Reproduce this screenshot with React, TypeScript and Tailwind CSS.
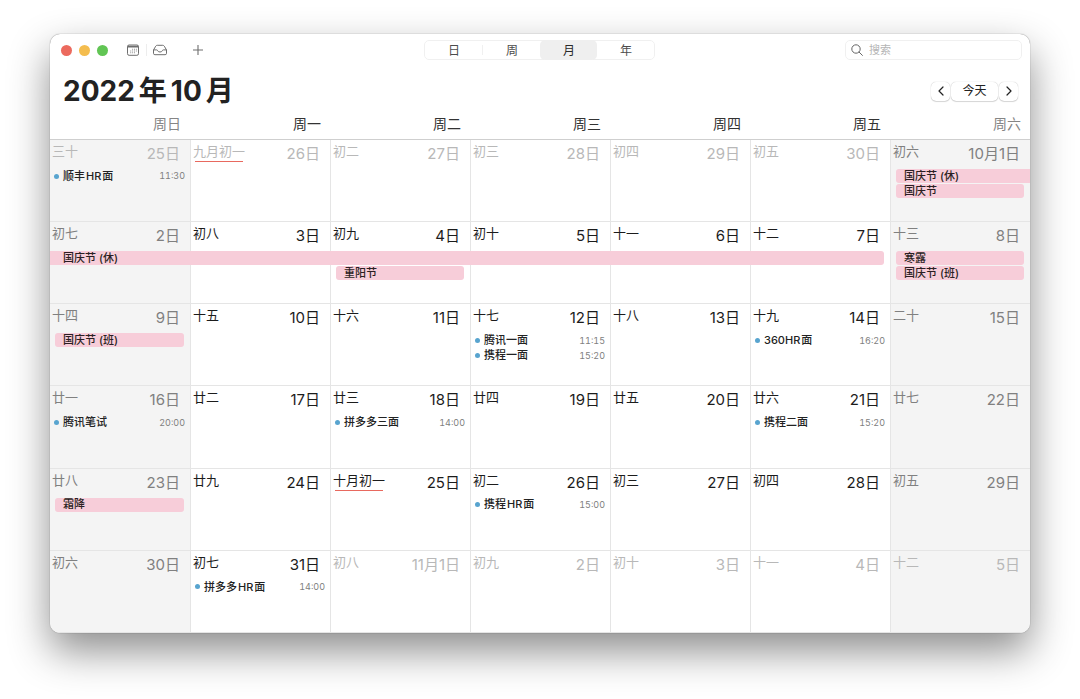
import React from "react";
import clsx from "clsx";

type Tone = "normal" | "weekend" | "outside";

type CalendarEvent =
  | { kind: "timed"; title: string; time: string }
  | { kind: "allDay"; title: string; fromPrevious?: boolean; toNext?: boolean };

interface Day {
  lunar: string;
  date: string;
  outside?: boolean;
  monthStart?: boolean;
  events?: CalendarEvent[];
}

const timed = (title: string, time: string): CalendarEvent => ({ kind: "timed", title, time });
const allDay = (title: string): CalendarEvent => ({ kind: "allDay", title });
const holidayMiddle: CalendarEvent = { kind: "allDay", title: "", fromPrevious: true, toNext: true };

const weekdays = ["周日", "周一", "周二", "周三", "周四", "周五", "周六"];

const weeks: Day[][] = [
  [
    { lunar: "三十", date: "25日", outside: true, events: [timed("顺丰HR面", "11:30")] },
    { lunar: "九月初一", date: "26日", outside: true, monthStart: true },
    { lunar: "初二", date: "27日", outside: true },
    { lunar: "初三", date: "28日", outside: true },
    { lunar: "初四", date: "29日", outside: true },
    { lunar: "初五", date: "30日", outside: true },
    {
      lunar: "初六",
      date: "10月1日",
      events: [{ kind: "allDay", title: "国庆节 (休)", toNext: true }, allDay("国庆节")],
    },
  ],
  [
    {
      lunar: "初七",
      date: "2日",
      events: [{ kind: "allDay", title: "国庆节 (休)", fromPrevious: true, toNext: true }],
    },
    { lunar: "初八", date: "3日", events: [holidayMiddle] },
    { lunar: "初九", date: "4日", events: [holidayMiddle, allDay("重阳节")] },
    { lunar: "初十", date: "5日", events: [holidayMiddle] },
    { lunar: "十一", date: "6日", events: [holidayMiddle] },
    { lunar: "十二", date: "7日", events: [{ kind: "allDay", title: "", fromPrevious: true }] },
    { lunar: "十三", date: "8日", events: [allDay("寒露"), allDay("国庆节 (班)")] },
  ],
  [
    { lunar: "十四", date: "9日", events: [allDay("国庆节 (班)")] },
    { lunar: "十五", date: "10日" },
    { lunar: "十六", date: "11日" },
    { lunar: "十七", date: "12日", events: [timed("腾讯一面", "11:15"), timed("携程一面", "15:20")] },
    { lunar: "十八", date: "13日" },
    { lunar: "十九", date: "14日", events: [timed("360HR面", "16:20")] },
    { lunar: "二十", date: "15日" },
  ],
  [
    { lunar: "廿一", date: "16日", events: [timed("腾讯笔试", "20:00")] },
    { lunar: "廿二", date: "17日" },
    { lunar: "廿三", date: "18日", events: [timed("拼多多三面", "14:00")] },
    { lunar: "廿四", date: "19日" },
    { lunar: "廿五", date: "20日" },
    { lunar: "廿六", date: "21日", events: [timed("携程二面", "15:20")] },
    { lunar: "廿七", date: "22日" },
  ],
  [
    { lunar: "廿八", date: "23日", events: [allDay("霜降")] },
    { lunar: "廿九", date: "24日" },
    { lunar: "十月初一", date: "25日", monthStart: true },
    { lunar: "初二", date: "26日", events: [timed("携程HR面", "15:00")] },
    { lunar: "初三", date: "27日" },
    { lunar: "初四", date: "28日" },
    { lunar: "初五", date: "29日" },
  ],
  [
    { lunar: "初六", date: "30日" },
    { lunar: "初七", date: "31日", events: [timed("拼多多HR面", "14:00")] },
    { lunar: "初八", date: "11月1日", outside: true },
    { lunar: "初九", date: "2日", outside: true },
    { lunar: "初十", date: "3日", outside: true },
    { lunar: "十一", date: "4日", outside: true },
    { lunar: "十二", date: "5日", outside: true },
  ],
];

const toneText: Record<Tone, string> = {
  normal: "text-[#1c1c1c]",
  weekend: "text-[#808080]",
  outside: "text-[#b8b8b8]",
};

function CalendarIcon() {
  return (
    <svg width="14" height="14" viewBox="0 0 14 14" fill="none" stroke="#6e6e6e" aria-hidden="true">
      <rect x="1.5" y="2" width="11" height="10.3" rx="1.6" />
      <path d="M1.5 3.6h11" strokeWidth="1.6" />
      <g fill="#8a8a8a" stroke="none">
        <path d="M6.2 5.8h.9v.9h-.9zM8 5.8h.9v.9H8zM9.9 5.8h.9v.9h-.9zM4.3 7.5h.9v.9h-.9zM6.2 7.5h.9v.9h-.9zM8 7.5h.9v.9H8zM9.9 7.5h.9v.9h-.9zM4.3 9.3h.9v.9h-.9zM6.2 9.3h.9v.9h-.9zM8 9.3h.9v.9H8z" />
      </g>
    </svg>
  );
}

function TrayIcon() {
  return (
    <svg width="16" height="14" viewBox="0 0 16 14" fill="none" stroke="#6e6e6e" strokeLinejoin="round" aria-hidden="true">
      <path d="M1.5 7 3.7 3.2Q4.3 2.3 5.3 2.3h5.4q1 0 1.6.9L14.5 7v3.3q0 1.4-1.4 1.4H2.9q-1.4 0-1.4-1.4Z" />
      <path d="M1.5 6.9h3.2q.7 0 .9.7Q6.1 9 8 9t2.4-1.4q.2-.7.9-.7h3.2" />
    </svg>
  );
}

function Toolbar() {
  return (
    <header className="grid h-8 grid-cols-3 items-center px-2">
      <div className="flex items-center pl-[3px]">
        <div className="flex gap-[7px]">
          <button aria-label="关闭" className="size-[11px] rounded-full bg-[#ec6a5e]" />
          <button aria-label="最小化" className="size-[11px] rounded-full bg-[#f4bd4f]" />
          <button aria-label="缩放" className="size-[11px] rounded-full bg-[#61c554]" />
        </div>
        <button aria-label="日历列表" className="ml-[18px]">
          <CalendarIcon />
        </button>
        <span className="ml-1.5 h-3 w-px bg-[#ededed]" />
        <button aria-label="收件箱" className="ml-[5px]">
          <TrayIcon />
        </button>
        <button aria-label="添加日程" className="ml-6">
          <svg width="12" height="12" viewBox="0 0 12 12" fill="none" stroke="#6e6e6e" aria-hidden="true">
            <path d="M6 1v10M1 6h10" strokeWidth="1.1" />
          </svg>
        </button>
      </div>
      <nav className="flex h-5 w-[231px] justify-self-center rounded-[5px] border border-[#f0f0f0] text-xs text-[#4c4c4c]">
        <button className="flex-1 pt-px">日</button>
        <span className="my-1 w-px bg-[#f0f0f0]" />
        <button className="flex-1 pt-px">周</button>
        <button aria-pressed="true" className="-my-px flex-1 rounded-[5px] bg-[#efefef] pt-px text-[#2a2a2a]">
          月
        </button>
        <button className="flex-1 pt-px">年</button>
      </nav>
      <label className="flex h-5 w-[177px] items-center gap-1.5 justify-self-end rounded-[5px] border border-[#f0f0f0] pl-[5px]">
        <svg width="12" height="12" viewBox="0 0 12 12" fill="none" stroke="#666" aria-hidden="true">
          <circle cx="5" cy="5" r="4.2" />
          <path d="m8.1 8.1 3.3 3.3" strokeLinecap="round" />
        </svg>
        <input
          type="search"
          aria-label="搜索"
          placeholder="搜索"
          className="min-w-0 flex-1 bg-transparent text-[11px] outline-none placeholder:text-[#b5b5b5]"
        />
      </label>
    </header>
  );
}

const navButton =
  "flex h-[19px] items-center justify-center rounded-[5px] bg-white shadow-[0_0_1px_rgba(0,0,0,0.3),0_1px_1px_rgba(0,0,0,0.14)]";

function MonthHeading() {
  return (
    <div className="flex h-[50px] items-center justify-between pr-3 pl-[13px]">
      <h1 className="text-[28px] leading-9 font-bold text-[#222]">
        2022<span className="mx-1">年</span>10<span className="ml-1">月</span>
      </h1>
      <div className="flex gap-px">
        <button aria-label="上个月" className={clsx(navButton, "w-[19px]")}>
          <svg width="6" height="10" viewBox="0 0 6 10" fill="none" stroke="#222" strokeWidth="1.2" strokeLinecap="round" strokeLinejoin="round" aria-hidden="true">
            <path d="M5 1 1 5l4 4" />
          </svg>
        </button>
        <button className={clsx(navButton, "w-[47px] text-xs text-[#222]")}>今天</button>
        <button aria-label="下个月" className={clsx(navButton, "w-[19px]")}>
          <svg width="6" height="10" viewBox="0 0 6 10" fill="none" stroke="#222" strokeWidth="1.2" strokeLinecap="round" strokeLinejoin="round" aria-hidden="true">
            <path d="m1 1 4 4-4 4" />
          </svg>
        </button>
      </div>
    </div>
  );
}

function EventTitle({ title }: { title: string }) {
  const [before, after] = title.split("HR");
  if (after === undefined) return <>{title}</>;
  return (
    <>
      {before}
      <span className={clsx("mr-px", !/\d$/.test(before) && "ml-px")}>HR</span>
      {after}
    </>
  );
}

function EventRow({ event }: { event: CalendarEvent }) {
  if (event.kind === "timed") {
    return (
      <li className="flex h-[14px] items-center pr-[5px] pl-1 text-[11px] font-medium text-[#222]">
        <span className="mr-1 size-[5px] rounded-full bg-[#58a4cf]" />
        <span className="flex-1 whitespace-nowrap">
          <EventTitle title={event.title} />
        </span>
        <time className="text-[9px] font-normal text-[#808080] tabular-nums">{event.time}</time>
      </li>
    );
  }
  return (
    <li
      className={clsx(
        "flex h-[14px] items-center bg-[#f7cdd9] text-[11px] font-medium whitespace-nowrap text-[#2b1f23]",
        event.fromPrevious ? "-ml-px pl-[14px]" : "ml-[5px] rounded-l-[3px] pl-2",
        !event.toNext && "mr-1.5 rounded-r-[3px]",
      )}
    >
      {event.title}
    </li>
  );
}

function DayCell({ day, column }: { day: Day; column: number }) {
  const weekend = column === 0 || column === 6;
  const tone: Tone = day.outside ? "outside" : weekend ? "weekend" : "normal";
  return (
    <td
      className={clsx(
        "h-[82px] border-b border-[#e5e5e5] p-0 align-top",
        column > 0 && "border-l",
        weekend && "bg-[#f4f4f4]",
      )}
    >
      <div className={clsx("flex h-[29px] justify-between pr-2.5 pl-0.5", toneText[tone])}>
        <span className="pt-[3px] text-[13px] leading-4">
          {day.lunar}
          {day.monthStart && <span className="mx-0.5 mt-0.5 block h-px bg-[#e8695f]" />}
        </span>
        <span className="pt-1 text-[15px] leading-5">{day.date}</span>
      </div>
      {day.events && (
        <ul className="flex flex-col gap-px">
          {day.events.map((event, index) => (
            <EventRow key={index} event={event} />
          ))}
        </ul>
      )}
    </td>
  );
}

export default function App() {
  return (
    <div className="flex min-h-screen flex-col bg-white px-[50px] pt-[34px] pb-[66px] font-['Inter','Noto_Sans_CJK_SC',sans-serif]">
      <main className="flex flex-1 flex-col overflow-hidden rounded-[10px] bg-white shadow-[0_0_1px_rgba(0,0,0,0.6),0_18px_40px_rgba(0,0,0,0.45)]">
        <Toolbar />
        <MonthHeading />
        <table className="w-full flex-1 table-fixed border-separate border-spacing-0">
          <thead>
            <tr>
              {weekdays.map((name, index) => (
                <th
                  key={name}
                  scope="col"
                  className={clsx(
                    "h-6 border-b border-[#cfcfcf] p-0 pr-[9px] text-right align-top text-sm leading-4 font-normal",
                    index === 0 || index === 6 ? "text-[#858585]" : "text-[#333]",
                  )}
                >
                  {name}
                </th>
              ))}
            </tr>
          </thead>
          <tbody>
            {weeks.map((week, row) => (
              <tr key={row}>
                {week.map((day, column) => (
                  <DayCell key={column} day={day} column={column} />
                ))}
              </tr>
            ))}
          </tbody>
        </table>
      </main>
    </div>
  );
}
